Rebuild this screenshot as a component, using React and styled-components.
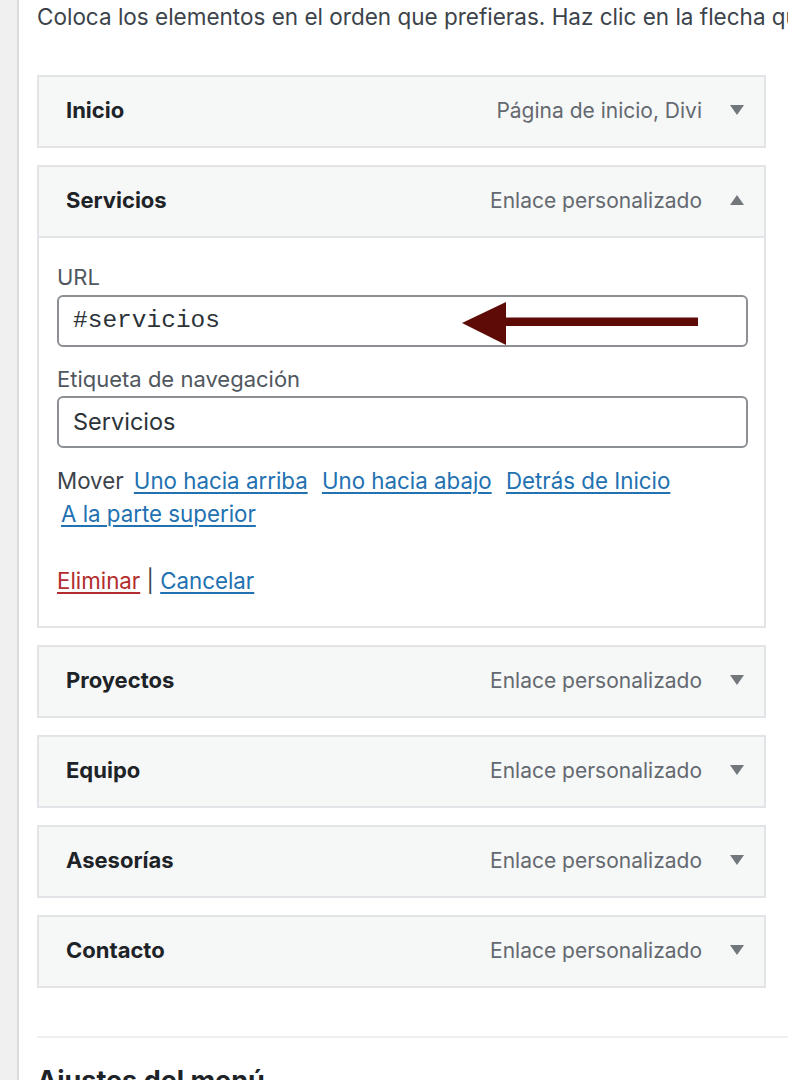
import React from "react";
import styled, { createGlobalStyle } from "styled-components";

const GlobalStyle = createGlobalStyle`
    html, body {
        margin: 0;
        padding: 0;
        background: #ffffff;
        overflow: hidden;
    }
    body {
        font-family: Inter, "Noto Sans", "Liberation Sans", sans-serif;
        color: #3c434a;
    }
`;

const Page = styled.div`
    display: flex;
    width: 788px;
    height: 1080px;
    overflow: hidden;
`;

const Sidebar = styled.div`
    flex: 0 0 17px;
    background: #f0f0f1;
    border-right: 2px solid #dcdcde;
`;

const Main = styled.div`
    flex: 1;
    min-width: 0;
    padding: 3px 0 0 18px;
`;

const Intro = styled.p`
    margin: 0 0 44px;
    font-size: 22.5px;
    line-height: 28px;
    white-space: nowrap;
    color: #3c434a;
`;

const List = styled.div`
    width: 729px;
    display: flex;
    flex-direction: column;
    gap: 17px;
`;

const Item = styled.div`
    border: 2px solid #e2e4e7;
    background: #f6f7f7;
`;

const Bar = styled.div`
    height: 66px;
    display: flex;
    align-items: center;
    padding: 0 20px 3px 27px;
    border-bottom: ${p => (p.open ? "2px solid #e2e4e7" : "none")};
`;

const Title = styled.span`
    flex: 1;
    font-size: 22px;
    font-weight: 700;
    color: #1d2327;
`;

const Kind = styled.span`
    font-size: 21px;
    color: #646970;
    margin-right: 28px;
`;

const Toggle = styled.svg`
    width: 14px;
    height: 10px;
    flex: 0 0 14px;
`;

const Settings = styled.div`
    background: #ffffff;
    height: 388px;
    box-sizing: border-box;
    padding: 25px 16px 30px 18px;
`;

const Label = styled.div`
    font-size: 22px;
    line-height: 28px;
    color: #50575e;
    margin-top: ${p => p.$top || 0}px;
`;

const InputWrap = styled.div`
    position: relative;
    margin-top: ${p => p.$top}px;
`;

const Input = styled.div`
    height: 52px;
    box-sizing: border-box;
    border: 2px solid #8c8f94;
    border-radius: 6px;
    background: #ffffff;
    display: flex;
    align-items: center;
    padding: 0 14px 2px;
    font-family: ${p => (p.mono ? '"Liberation Mono", "DejaVu Sans Mono", monospace' : 'Inter, "Noto Sans", sans-serif')};
    font-size: ${p => (p.mono ? "24.5px" : "23.5px")};
    color: #2c3338;
`;

const Pointer = styled.svg`
    position: absolute;
    left: 0;
    top: 0;
    width: 690px;
    height: 52px;
    pointer-events: none;
`;

const MoveRow = styled.div`
    margin-top: 16px;
    font-size: 22.3px;
    line-height: 33px;
    color: #3c434a;
`;

const Link = styled.a`
    color: ${p => (p.danger ? "#b32d2e" : "#2271b1")};
    text-decoration: underline;
    text-underline-offset: 3px;
    text-decoration-thickness: 1.5px;
    white-space: nowrap;
    margin: ${p => (p.tight ? "0" : "0 4px")};
    cursor: pointer;
`;

const Actions = styled.div`
    margin-top: 37px;
    font-size: 22.3px;
    line-height: 28px;
    color: #3c434a;
`;

const Divider = styled.div`
    margin-top: 48px;
    height: 2px;
    background: #f0f0f1;
`;

const Heading = styled.h3`
    margin: 27px 0 0;
    font-size: 27px;
    line-height: 32px;
    font-weight: 700;
    color: #1d2327;
`;

const items = [
    { title: "Inicio", kind: "Página de inicio, Divi" },
    { title: "Servicios", kind: "Enlace personalizado", open: true },
    { title: "Proyectos", kind: "Enlace personalizado" },
    { title: "Equipo", kind: "Enlace personalizado" },
    { title: "Asesorías", kind: "Enlace personalizado" },
    { title: "Contacto", kind: "Enlace personalizado" }
];

const Arrow = ({ up }) => (
    <Toggle viewBox="0 0 14 10">
        <polygon points={up ? "0,10 14,10 7,0" : "0,0 14,0 7,10"} fill="#72777c" />
    </Toggle>
);

const ItemSettings = () => (
    <Settings>
        <Label>URL</Label>
        <InputWrap $top={4}>
            <Input mono>#servicios</Input>
            <Pointer viewBox="0 0 690 52">
                <rect x="446" y="22.5" width="195" height="8.5" fill="#5e0b08" />
                <polygon points="405,28 449,7 449,50" fill="#5e0b08" />
            </Pointer>
        </InputWrap>
        <Label $top={18}>Etiqueta de navegación</Label>
        <InputWrap $top={3}>
            <Input>Servicios</Input>
        </InputWrap>
        <MoveRow>
            Mover <Link>Uno hacia arriba</Link> <Link>Uno hacia abajo</Link>{" "}
            <Link>Detrás de Inicio</Link> <Link>A la parte superior</Link>
        </MoveRow>
        <Actions>
            <Link danger tight>Eliminar</Link> | <Link tight>Cancelar</Link>
        </Actions>
    </Settings>
);

const App = () => {
    return (
        <Page>
            <GlobalStyle />
            <Sidebar />
            <Main>
                <Intro>
                    Coloca los elementos en el orden que prefieras. Haz clic en la flecha que hay a la derecha del elemento para mostrar más opciones de configuración.
                </Intro>
                <List>
                    {items.map(item => (
                        <Item key={item.title}>
                            <Bar open={item.open}>
                                <Title>{item.title}</Title>
                                <Kind>{item.kind}</Kind>
                                <Arrow up={item.open} />
                            </Bar>
                            {item.open && <ItemSettings />}
                        </Item>
                    ))}
                </List>
                <Divider />
                <Heading>Ajustes del menú</Heading>
            </Main>
        </Page>
    );
};

export default App;
